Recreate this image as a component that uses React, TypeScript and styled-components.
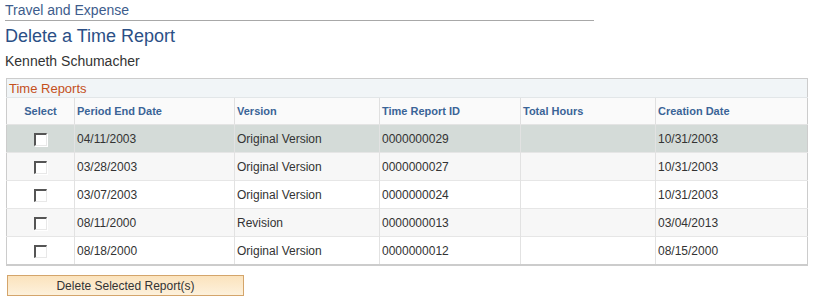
import styled, { createGlobalStyle } from "styled-components";

const GlobalStyle = createGlobalStyle`
    body {
        margin: 0;
        background: #ffffff;
        font-family: "Liberation Sans", Arial, sans-serif;
    }
`

const reports = [
    { end: "04/11/2003", version: "Original Version", id: "0000000029", hours: "", created: "10/31/2003" },
    { end: "03/28/2003", version: "Original Version", id: "0000000027", hours: "", created: "10/31/2003" },
    { end: "03/07/2003", version: "Original Version", id: "0000000024", hours: "", created: "10/31/2003" },
    { end: "08/11/2000", version: "Revision", id: "0000000013", hours: "", created: "03/04/2013" },
    { end: "08/18/2000", version: "Original Version", id: "0000000012", hours: "", created: "08/15/2000" },
]

function App() {
    return (
        <>
            <GlobalStyle/>
            <Page>
                <Breadcrumb>Travel and Expense</Breadcrumb>
                <Title>Delete a Time Report</Title>
                <Employee>Kenneth Schumacher</Employee>
                <Grid>
                    <colgroup>
                        <col style={{ width: 68 }}/>
                        <col style={{ width: 160 }}/>
                        <col style={{ width: 145 }}/>
                        <col style={{ width: 141 }}/>
                        <col style={{ width: 135 }}/>
                        <col/>
                    </colgroup>
                    <thead>
                        <tr>
                            <GridTitle colSpan={6}>Time Reports</GridTitle>
                        </tr>
                        <tr>
                            <HeadCell $center>Select</HeadCell>
                            <HeadCell>Period End Date</HeadCell>
                            <HeadCell>Version</HeadCell>
                            <HeadCell>Time Report ID</HeadCell>
                            <HeadCell>Total Hours</HeadCell>
                            <HeadCell>Creation Date</HeadCell>
                        </tr>
                    </thead>
                    <tbody>
                        {reports.map((r, i) => (
                            <Row key={r.id} $tone={i === 0 ? "active" : i % 2 === 1 ? "alt" : "plain"}>
                                <Cell $center><CheckBox/></Cell>
                                <Cell>{r.end}</Cell>
                                <Cell>{r.version}</Cell>
                                <Cell>{r.id}</Cell>
                                <Cell>{r.hours}</Cell>
                                <Cell>{r.created}</Cell>
                            </Row>
                        ))}
                    </tbody>
                </Grid>
                <DeleteButton>Delete Selected Report(s)</DeleteButton>
            </Page>
        </>
    )
}

const Page = styled.div`
    width: 813px;
    height: 300px;
    padding: 1px 5px 0 5px;
    box-sizing: border-box;
    display: flex;
    flex-direction: column;
    align-items: flex-start;
`

const Breadcrumb = styled.div`
    width: 589px;
    font-size: 14px;
    line-height: 18px;
    color: #3d5c8c;
    border-bottom: 1px solid #a8a8a8;
    padding-bottom: 1px;
`

const Title = styled.h1`
    margin: 4px 0 0 0;
    font-size: 18px;
    font-weight: normal;
    line-height: 22px;
    color: #2b4f86;
`

const Employee = styled.div`
    margin-top: 5px;
    font-size: 14px;
    line-height: 18px;
    color: #333333;
`

const Grid = styled.table`
    margin: 8px 0 0 1px;
    width: 802px;
    border-collapse: collapse;
    table-layout: fixed;
    border: 1px solid #cccccc;
    border-bottom-width: 2px;
`

const GridTitle = styled.th`
    height: 18px;
    padding: 0 0 0 2px;
    text-align: left;
    font-size: 13px;
    font-weight: normal;
    color: #c4501c;
    background: #f1f5f7;
    border-bottom: 1px solid #e2e6e8;
`

const HeadCell = styled.th<{ $center?: boolean }>`
    height: 25px;
    padding: 0 2px 1px 2px;
    text-align: ${p => (p.$center ? "center" : "left")};
    font-size: 11px;
    font-weight: bold;
    color: #3a6497;
    background: #fafafa;
    border-left: 1px solid #e0e0e0;
    border-bottom: 1px solid #e4e4e4;

    &:first-child {
        border-left: none;
    }
`

const toneColors = {
    active: "#d4dbd8",
    alt: "#f7f7f7",
    plain: "#ffffff",
}

const Row = styled.tr<{ $tone: keyof typeof toneColors }>`
    background: ${p => toneColors[p.$tone]};
`

const Cell = styled.td<{ $center?: boolean }>`
    height: 27px;
    padding: 0 2px;
    text-align: ${p => (p.$center ? "center" : "left")};
    font-size: 12px;
    color: #333333;
    border-left: 1px solid #e2e2e2;
    border-top: 1px solid #e6e6e6;
    white-space: nowrap;

    &:first-child {
        border-left: none;
    }
`

const CheckBox = styled.span`
    display: inline-block;
    width: 13px;
    height: 13px;
    box-sizing: border-box;
    vertical-align: middle;
    background: #ffffff;
    border-top: 2px solid #555555;
    border-left: 2px solid #555555;
    border-right: 1px solid #e8e8e8;
    border-bottom: 1px solid #e8e8e8;
    box-shadow: 1px 1px 0 #ffffff;
`

const DeleteButton = styled.button`
    margin: 9px 0 0 2px;
    width: 237px;
    height: 21px;
    padding: 0;
    font-family: "Liberation Sans", Arial, sans-serif;
    font-size: 12px;
    color: #333333;
    background: linear-gradient(#fbe3bd, #fdf1dc);
    border: 1px solid #d4a56b;
    border-radius: 0;
    cursor: pointer;
`

export default App
